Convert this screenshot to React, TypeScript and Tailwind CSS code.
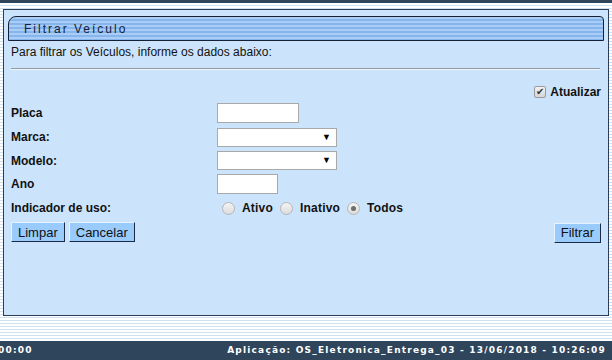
import React from 'react';

const labelCls = 'w-[206px] font-bold text-[12px] text-[#111]';

function Radio({ checked, label }: { checked?: boolean; label: string }) {
  return (
    <label className="flex items-center gap-[7px] mr-[3px]">
      <span className="w-[13px] h-[13px] rounded-full border border-[#b5b5b5] bg-gradient-to-b from-[#f4f4f4] to-[#dcdcdc] flex items-center justify-center">
        {checked && <span className="w-[5px] h-[5px] rounded-full bg-[#6d6d6d]" />}
      </span>
      <span className="font-bold text-[12px] tracking-[0.2px] text-[#111]">{label}</span>
    </label>
  );
}

function Select({ width }: { width: string }) {
  return (
    <div className={`${width} h-[19px] bg-white border border-[#a9a9a9] flex items-center justify-end pr-[5px]`}>
      <span className="text-[9px] leading-none text-black">▼</span>
    </div>
  );
}

function Btn({ children }: { children: React.ReactNode }) {
  return (
    <button className="h-[20px] px-[6px] bg-[#99cbfc] border border-t-[#e6f2ff] border-l-[#e6f2ff] border-r-[#1c2a44] border-b-[#1c2a44] text-[13px] text-[#111] leading-none">
      {children}
    </button>
  );
}

export default function App() {
  return (
    <div className="w-[612px] h-[360px] overflow-hidden flex flex-col font-['Liberation_Sans',Arial,sans-serif] bg-[repeating-linear-gradient(180deg,#ffffff_0px,#ffffff_2px,#cfe2f3_2px,#cfe2f3_3px)]">
      <div className="h-[3px] bg-[#2e455b]" />
      <div className="h-[6px]" />

      {/* Panel */}
      <div className="mx-[3px] h-[307px] border border-[#2b3d55] bg-[#cce4fb] px-[7px] pt-[6px]">
        <div className="-mx-[3px] h-[25px] border border-[#142033] rounded-tl-[8px] rounded-tr-[4px] flex items-center pl-[15px] bg-[repeating-linear-gradient(180deg,#a9cdf6_0px,#a9cdf6_2px,#86b5ec_2px,#86b5ec_4px)]">
          <span className="text-[12px] tracking-[2px] text-[#14223a]">Filtrar Veículo</span>
        </div>

        <p className="mt-[2px] text-[12px] text-[#111]">Para filtrar os Veículos, informe os dados abaixo:</p>
        <div className="mt-[7px] h-[2px] border-t border-[#8f9aa5] bg-[#eef5fd] mr-[1px]" />

        <div className="mt-[13px] flex justify-end items-center gap-[4px]">
          <span className="w-[12px] h-[12px] border border-[#9a9a9a] rounded-[2px] bg-gradient-to-b from-[#f2f2f2] to-[#d6d6d6] flex items-center justify-center text-[10px] leading-none text-[#333]">✔</span>
          <span className="font-bold text-[12px] text-[#111]">Atualizar</span>
        </div>

        <div className="mt-[2px] flex flex-col gap-[4px]">
          <div className="flex items-center h-[20px]">
            <span className={labelCls}>Placa</span>
            <div className="w-[82px] h-[20px] bg-white border border-[#a9a9a9]" />
          </div>
          <div className="flex items-center h-[20px]">
            <span className={labelCls}>Marca:</span>
            <Select width="w-[120px]" />
          </div>
          <div className="flex items-center h-[19px]">
            <span className={labelCls}>Modelo:</span>
            <Select width="w-[120px]" />
          </div>
          <div className="flex items-center h-[20px]">
            <span className={labelCls}>Ano</span>
            <div className="w-[61px] h-[20px] bg-white border border-[#a9a9a9]" />
          </div>
          <div className="flex items-center h-[20px]">
            <span className={labelCls}>Indicador de uso:</span>
            <div className="flex items-center gap-[4px] pl-[5px]">
              <Radio label="Ativo" />
              <Radio label="Inativo" />
              <Radio label="Todos" checked />
            </div>
          </div>
        </div>

        <div className="mt-[2px] flex items-center">
          <div className="flex gap-[4px]">
            <Btn>Limpar</Btn>
            <Btn>Cancelar</Btn>
          </div>
          <div className="ml-auto">
            <Btn>Filtrar</Btn>
          </div>
        </div>
      </div>

      <div className="flex-1" />

      {/* Footer */}
      <div className="h-[19px] bg-[#2e455b] flex items-center justify-between pr-[6px] font-['DejaVu_Sans',Verdana,sans-serif] font-bold text-[9px] tracking-[1.2px] text-white">
        <span className="-ml-[2px]">00:00</span>
        <span>Aplicação: OS_Eletronica_Entrega_03 - 13/06/2018 - 10:26:09</span>
      </div>
    </div>
  );
}
